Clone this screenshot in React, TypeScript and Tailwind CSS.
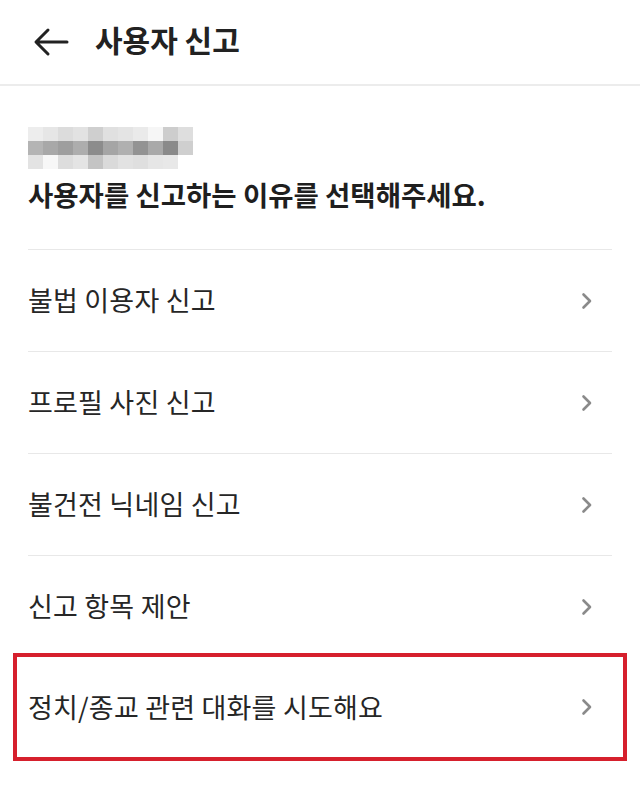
import React from 'react';

const items = ['불법 이용자 신고', '프로필 사진 신고', '불건전 닉네임 신고', '신고 항목 제안'];

const blur = [
  ['#ededed', '#e6e6e6', '#dcdcdc', '#e2e2e2', '#cfcfcf', '#e0e0e0', '#e4e4e4', '#eaeaea', '#f6f6f6', '#cdcdcd', '#dedede'],
  ['#b4b4b4', '#a8a8a8', '#9e9e9e', '#adadad', '#8c8c8c', '#a5a5a5', '#b0b0b0', '#939393', '#a9a9a9', '#8a8a8a', '#cfcfcf'],
  ['#e3e3e3', '#f7f7f7', '#dddddd', '#e4e4e4', '#c4c4c4', '#dadada', '#e2e2e2', '#dfdfdf', '#e6e6e6', '#e8e8e8', '#ffffff'],
];

const Chevron = () => (
  <svg width="14" height="18" viewBox="0 0 14 18" fill="none">
    <path d="M3.5 2.5 L10 9 L3.5 15.5" stroke="#8a8a8a" strokeWidth="2.6" strokeLinecap="round" strokeLinejoin="round" />
  </svg>
);

const Row = ({ label }: { label: string }) => (
  <div className="h-[102px] flex items-center justify-between border-t border-[#e8e8e8]">
    <span className="text-[27px] tracking-[0.2px] text-[#262626]">{label}</span>
    <span className="mr-[18px]">
      <Chevron />
    </span>
  </div>
);

export default function App() {
  return (
    <div className="w-[640px] h-[808px] bg-white overflow-hidden" style={{ fontFamily: '"Noto Sans CJK KR", "Noto Sans", sans-serif' }}>
      <header className="h-[86px] flex items-center border-b-2 border-[#ececec]">
        <svg className="ml-[33px]" width="36" height="30" viewBox="0 0 36 30" fill="none">
          <path d="M34 15 H4 M15 3 L3 15 L15 27" stroke="#222" strokeWidth="3" strokeLinecap="round" strokeLinejoin="round" />
        </svg>
        <h1 className="ml-[26px] text-[30px] font-bold text-[#222] pb-[6px]">사용자 신고</h1>
      </header>

      <section className="px-[28px] pt-[41px]">
        <div className="grid grid-cols-[repeat(11,15px)] grid-rows-[repeat(3,14px)] w-[165px]">
          {blur.flat().map((c, i) => (
            <div key={i} className="w-[15px] h-[14px]" style={{ backgroundColor: c }} />
          ))}
        </div>
        <p className="mt-[7px] text-[27.5px] font-bold text-[#1f1f1f] leading-[36px]">
          사용자를 신고하는 이유를 선택해주세요.
        </p>
        <div className="h-[37px]" />
        {items.map((t) => (
          <Row key={t} label={t} />
        ))}
      </section>

      <div className="mx-[13px] -mt-[4px] h-[108px] border-4 border-[#d6202d] px-[11px] flex items-center justify-between">
        <span className="text-[27px] tracking-[0.2px] text-[#262626]">정치/종교 관련 대화를 시도해요</span>
        <span className="mr-[18px]">
          <Chevron />
        </span>
      </div>
    </div>
  );
}
